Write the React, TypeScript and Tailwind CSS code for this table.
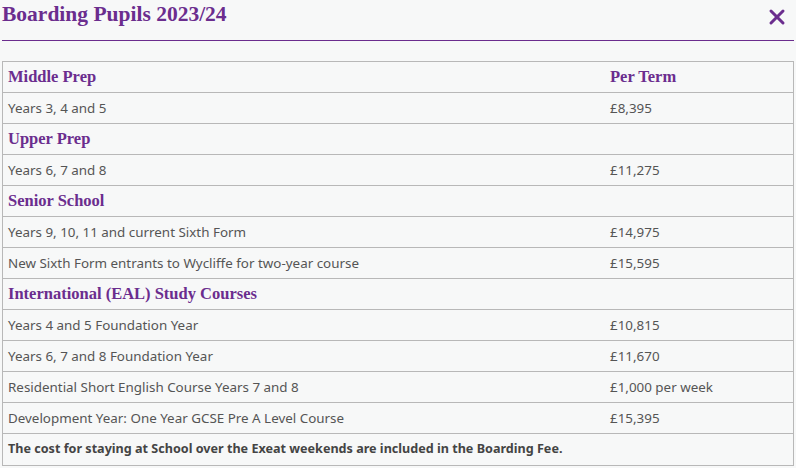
import { X } from 'lucide-react';

type Row = { label: string; price?: string; head?: boolean; note?: boolean };

const rows: Row[] = [
  { label: 'Middle Prep', price: 'Per Term', head: true },
  { label: 'Years 3, 4 and 5', price: '£8,395' },
  { label: 'Upper Prep', head: true },
  { label: 'Years 6, 7 and 8', price: '£11,275' },
  { label: 'Senior School', head: true },
  { label: 'Years 9, 10, 11 and current Sixth Form', price: '£14,975' },
  { label: 'New Sixth Form entrants to Wycliffe for two-year course', price: '£15,595' },
  { label: 'International (EAL) Study Courses', head: true },
  { label: 'Years 4 and 5 Foundation Year', price: '£10,815' },
  { label: 'Years 6, 7 and 8 Foundation Year', price: '£11,670' },
  { label: 'Residential Short English Course Years 7 and 8', price: '£1,000 per week' },
  { label: 'Development Year: One Year GCSE Pre A Level Course', price: '£15,395' },
  { label: 'The cost for staying at School over the Exeat weekends are included in the Boarding Fee.', note: true },
];

const serif = "font-['Liberation_Serif',serif]";

const App = () => {
  return (
    <div className="w-[796px] h-[468px] bg-[#f7f8f8] overflow-hidden font-['Noto_Sans',sans-serif]">
      <div className="mx-[2px] h-[41px] flex justify-between items-start border-b border-[#6b2d8e]">
        <h2 className={`${serif} text-[21.5px] font-bold text-[#6b2d8e] leading-none pt-[4px]`}>
          Boarding Pupils 2023/24
        </h2>
        <X className="text-[#6b2d8e] mt-[5px] mr-[5px]" size={24} strokeWidth={3} />
      </div>

      <div className="mt-[20px] ml-[2px] w-[792px] border border-[#b8b8b8]">
        {rows.map((r, i) => (
          <div
            key={i}
            className="flex items-center h-[31px] border-b border-[#b8b8b8] last:border-b-0"
          >
            {r.note ? (
              <div className="pl-[5px] text-[12.6px] font-bold text-[#444]">{r.label}</div>
            ) : (
              <>
                <div
                  className={
                    r.head
                      ? `w-[602px] pl-[5px] ${serif} text-[16.5px] font-bold text-[#6b2d8e]`
                      : 'w-[602px] pl-[5px] text-[13.4px] text-[#555]'
                  }
                >
                  {r.label}
                </div>
                <div
                  className={
                    r.head
                      ? `pl-[5px] ${serif} text-[16.5px] font-bold text-[#6b2d8e]`
                      : 'pl-[5px] text-[13.4px] text-[#555]'
                  }
                >
                  {r.price}
                </div>
              </>
            )}
          </div>
        ))}
      </div>
    </div>
  );
};

export default App;
